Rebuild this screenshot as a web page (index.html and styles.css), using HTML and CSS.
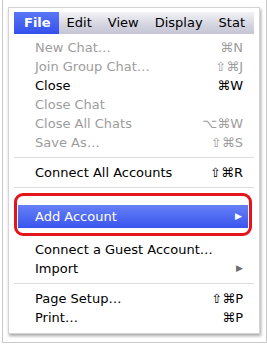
FILE: index.html
```html
<!DOCTYPE html>
<html lang="en">
<head>
		<meta charset="UTF-8">
		<title>File Menu</title>
		<link rel="stylesheet" href="styles.css">
</head>
<body>

		<div class="frame">
				<div class="card">

						<!-- MENU BAR -->
						<div class="menubar">
								<span class="title active">File</span>
								<span class="title">Edit</span>
								<span class="title">View</span>
								<span class="title">Display</span>
								<span class="title">Stat</span>
						</div>

						<!-- FILE MENU -->
						<div class="menu">
								<div class="item off"><span>New Chat…</span><span class="key">⌘N</span></div>
								<div class="item off"><span>Join Group Chat…</span><span class="key">⇧⌘J</span></div>
								<div class="item"><span>Close</span><span class="key">⌘W</span></div>
								<div class="item off"><span>Close Chat</span><span class="key"></span></div>
								<div class="item off"><span>Close All Chats</span><span class="key">⌥⌘W</span></div>
								<div class="item off"><span>Save As…</span><span class="key">⇧⌘S</span></div>
								<div class="sep"></div>
								<div class="item"><span>Connect All Accounts</span><span class="key">⇧⌘R</span></div>
								<div class="sep"></div>
								<div class="callout">
										<div class="item selected"><span>Add Account</span><span class="arrow">▶</span></div>
								</div>
								<div class="item"><span>Connect a Guest Account…</span><span class="key"></span></div>
								<div class="item"><span>Import</span><span class="arrow">▶</span></div>
								<div class="sep"></div>
								<div class="item"><span>Page Setup…</span><span class="key">⇧⌘P</span></div>
								<div class="item"><span>Print…</span><span class="key">⌘P</span></div>
						</div>

				</div>
		</div>

</body>
</html>
```

FILE: styles.css
```css
* {
		margin: 0;
		padding: 0;
		box-sizing: border-box;
}

body {
		background: #fff;
		font-family: 'DejaVu Sans', sans-serif;
		overflow: hidden;
}

/* outer frame */
.frame {
		margin-left: 2px;
		width: 265px;
		height: 343px;
		border: 1px solid #c9c9c9;
		border-top: none;
		padding: 7px 0 0 5px;
}

.card {
		width: 252px;
		height: 327px;
		background: #fff;
		border: 1px solid #d4d4d4;
		box-shadow: 1px 2px 3px rgba(0, 0, 0, 0.35);
		padding: 4px 5px 0 5px;
		overflow: hidden;
}

/* MENU BAR */
.menubar {
		display: flex;
		height: 22px;
		background: linear-gradient(#f2f2f6, #d6d6e2 55%, #c4c4d4);
		font-size: 13px;
		line-height: 22px;
		color: #000;
		white-space: nowrap;
		overflow: hidden;
}

.menubar .title {
		padding: 0 8px;
}

.menubar .active {
		font-weight: bold;
		color: #fff;
		padding: 0 8px 0 10px;
		background: linear-gradient(#5a76f6, #3350ee);
}

/* MENU */
.menu {
		padding-top: 4px;
		font-size: 13px;
}

.item {
		display: flex;
		justify-content: space-between;
		align-items: center;
		height: 19px;
		line-height: 19px;
		padding: 0 11px 0 21px;
		color: #000;
}

.item.off {
		color: #9d9d9d;
}

.key {
		font-size: 13px;
}

.arrow {
		font-size: 9px;
		color: #6e6e6e;
}

.sep {
		height: 1px;
		background: #dcdcdc;
		margin: 5px 0;
}

/* highlighted entry with the red callout */
.callout {
		margin: 2px 2px 4px 0;
		border: 3px solid #e3141c;
		border-radius: 9px;
		padding: 9px 1px 5px 1px;
}

.item.selected {
		height: 23px;
		line-height: 23px;
		padding: 0 6px 0 17px;
		color: #fff;
		background: linear-gradient(#6680f6, #3a55ee);
}

.item.selected .arrow {
		color: #fff;
}
```
